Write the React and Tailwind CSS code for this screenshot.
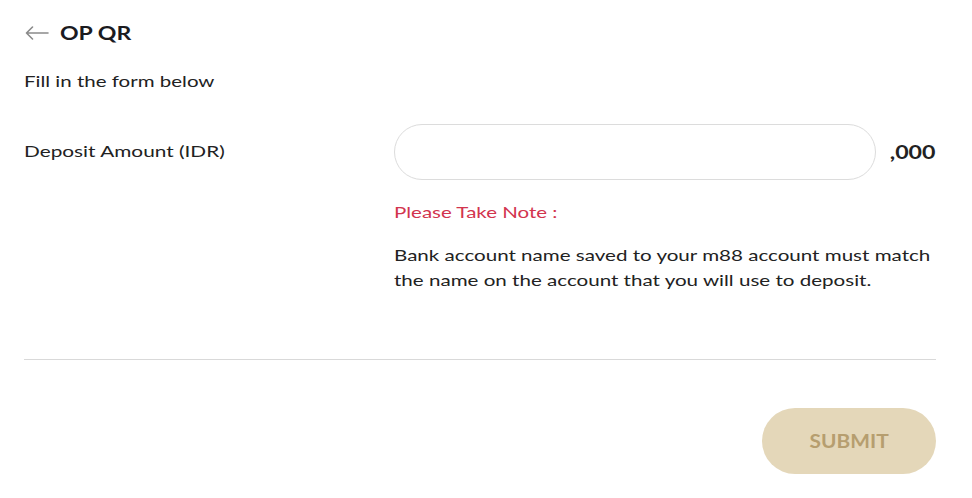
export default function App() {
  return (
    <div className="w-[972px] h-[498px] bg-white pl-6 pr-9 text-[#222] font-['Lato',sans-serif] overflow-hidden">
      <div className="h-[66px] flex items-center">
        <svg width="24" height="14" viewBox="0 0 24 14" className="ml-[1px] mr-[11px]" fill="none" stroke="#8a8a8a" strokeWidth="1.6" strokeLinecap="round" strokeLinejoin="round">
          <path d="M23 7H1.5M7.5 1L1.5 7l6 6" />
        </svg>
        <span className="inline-block origin-left scale-x-[1.28] text-[18px] font-bold text-[#1b1b1f]">OP QR</span>
      </div>
      <p className="mt-[3px] text-[16px] leading-[24px]">
        <span className="inline-block origin-left scale-x-[1.28]">Fill in the form below</span>
      </p>
      <div className="mt-[31px] flex items-center">
        <div className="w-[370px] mb-[3px] text-[16px] leading-[24px]">
          <span className="inline-block origin-left scale-x-[1.3]">Deposit Amount (IDR)</span>
        </div>
        <div className="w-[482px] h-[56px] rounded-full border border-[#dcdcdc] bg-white"></div>
        <div className="flex-1 text-right text-[19px] font-bold">
          <span className="inline-block origin-right scale-x-[1.22]">,000</span>
        </div>
      </div>
      <div className="ml-[370px] mt-[20px]">
        <p className="text-[16px] leading-[24px] text-[#d2344e]">
          <span className="inline-block origin-left scale-x-[1.28]">Please Take Note :</span>
        </p>
        <p className="mt-[18px] w-[430px] origin-left scale-x-[1.285] text-[16px] leading-[25px]">
          Bank account name saved to your m88 account must match the name on the account that you will use to deposit.
        </p>
      </div>
      <div className="mt-[67px] h-px bg-[#d9d9d9]"></div>
      <div className="mt-[48px] flex justify-end">
        <button className="w-[174px] h-[66px] rounded-full bg-[#e4d7b9] text-[#b69e6f] text-[18px] font-bold">
          <span className="inline-block scale-x-[1.16]">SUBMIT</span>
        </button>
      </div>
    </div>
  );
}
